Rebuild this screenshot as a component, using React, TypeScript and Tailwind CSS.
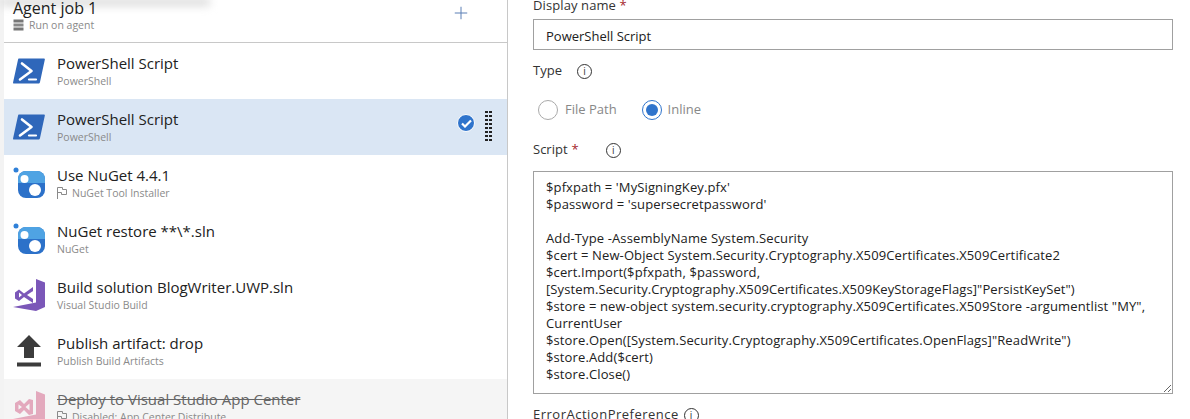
import { Plus } from "lucide-react";

const font = { fontFamily: '"Open Sans", sans-serif' };

const scriptText = `$pfxpath = 'MySigningKey.pfx'
$password = 'supersecretpassword'

Add-Type -AssemblyName System.Security
$cert = New-Object System.Security.Cryptography.X509Certificates.X509Certificate2
$cert.Import($pfxpath, $password,
[System.Security.Cryptography.X509Certificates.X509KeyStorageFlags]"PersistKeySet")
$store = new-object system.security.cryptography.X509Certificates.X509Store -argumentlist "MY",
CurrentUser
$store.Open([System.Security.Cryptography.X509Certificates.OpenFlags]"ReadWrite")
$store.Add($cert)
$store.Close()`;

function PowerShellIcon() {
    return (
        <svg width="32" height="26" viewBox="0 0 32 26">
            <path d="M6 0.5H31c0.8 0 1 0.5 0.8 1.2L27 24c-0.2 1-0.8 1.5-1.7 1.5H1c-0.8 0-1.1-0.5-0.9-1.3L5 1.8C5.2 1 5.5 0.5 6 0.5Z" fill="#2f67ba" />
            <path d="M9 5.5L18.5 13L7 21.5" fill="none" stroke="#fff" strokeWidth="2.6" strokeLinecap="round" strokeLinejoin="round" />
            <path d="M16 21.5H23" fill="none" stroke="#fff" strokeWidth="2.2" strokeLinecap="round" />
        </svg>
    );
}

function NuGetIcon() {
    return (
        <svg width="32" height="32" viewBox="0 0 32 32">
            <circle cx="3" cy="3" r="2.5" fill="#2f80d8" />
            <rect x="5" y="4" width="27" height="27" rx="8" fill="#2c71c9" />
            <path d="M5 12a8 8 0 0 1 8-8h11a8 8 0 0 1 8 8v4H5Z" fill="#4fa3e3" />
            <circle cx="11.5" cy="12" r="4" fill="#fff" />
            <circle cx="22" cy="23" r="6" fill="#fff" />
        </svg>
    );
}

function VisualStudioIcon({ color = "#7b57b8" }: { color?: string }) {
    return (
        <svg width="32" height="33" viewBox="0 0 32 33">
            <path d="M23 0L32 3.5V28L23 32L0 28L23 23.5Z" fill={color} />
            <path d="M2 13.5L6 10.5L11 14.5L20 8V24L11 18L6 22L2 19.5Z M6 13.5V18.5L9 16Z M14 16L20 20V12Z" fill={color} fillRule="evenodd" />
        </svg>
    );
}

function AppCenterIcon() {
    return (
        <svg width="32" height="33" viewBox="0 0 32 33">
            <path d="M23 0L32 3.5V28L23 32L0 28L23 23.5Z" fill="#e3a9bd" />
            <path d="M2 12L7 9L11 13L16 8L20 9V23L16 24L11 19L7 23L2 20Z" fill="#e3a9bd" />
            <path d="M12.5 16L16.5 12.5V19.5Z M5.5 13.5L9 16L5.5 18.5Z" fill="#f5f5f5" />
        </svg>
    );
}

function UploadIcon() {
    return (
        <svg width="24" height="32" viewBox="0 0 24 32">
            <path d="M12 0L24 12H17V23H7V12H0Z" fill="#3c3c3c" />
            <rect y="27.5" width="24" height="4" fill="#3c3c3c" />
        </svg>
    );
}

function TagIcon({ kind }: { kind: "server" | "flag" }) {
    if (kind === "server") {
        return (
            <svg width="11" height="12" viewBox="0 0 11 12" className="shrink-0">
                <rect x="0.5" y="0.5" width="10" height="3" fill="#777" />
                <rect x="0.5" y="4.5" width="10" height="3" fill="#888" />
                <rect x="0.5" y="8.5" width="10" height="3" fill="#777" />
            </svg>
        );
    }
    return (
        <svg width="10" height="12" viewBox="0 0 10 12" className="shrink-0" fill="none" stroke="#8a8a8a">
            <path d="M0.5 12V0.5H5.5V2.5H9.5V7.5H4.5V5.5H0.5" />
        </svg>
    );
}

function InfoIcon() {
    return (
        <span className="w-[15px] h-[15px] rounded-full border border-[#333] flex items-center justify-center text-[10px] leading-none text-[#333]">
            i
        </span>
    );
}

function TaskRow({
    icon,
    title,
    subtitle,
    tag,
    selected,
    disabled,
}: {
    icon: React.ReactNode;
    title: string;
    subtitle: string;
    tag?: boolean;
    selected?: boolean;
    disabled?: boolean;
}) {
    return (
        <div className={`h-14 shrink-0 flex items-center ${selected ? "bg-[#dae6f4]" : disabled ? "bg-[#f5f5f5]" : ""}`}>
            <div className="w-[53px] pl-[9px] shrink-0">{icon}</div>
            <div className="min-w-0 flex-1">
                <div className={`text-[15px] leading-[19px] ${disabled ? "text-[#666] line-through" : "text-[#212121]"}`}>
                    {title}
                </div>
                <div className="flex items-center gap-[5px] mt-[1px] text-[10.5px] leading-[14px] text-[#8a8a8a]">
                    {tag && <TagIcon kind="flag" />}
                    {subtitle}
                </div>
            </div>
            {selected && (
                <div className="flex items-center gap-[10px] pr-[15px]">
                    <span className="w-[18px] h-[18px] -mt-[8px] rounded-full bg-[#2f74cc] border border-white flex items-center justify-center">
                        <svg width="11" height="9" viewBox="0 0 11 9" fill="none" stroke="#fff" strokeWidth="2.2">
                            <path d="M1 4.5L4 7.5L10 1.5" />
                        </svg>
                    </span>
                    <div className="grid grid-cols-2 gap-x-[1px] gap-y-[2px] -mt-[2px]">
                        {Array.from({ length: 16 }).map((_, i) => (
                            <span key={i} className="w-[3px] h-[2px] bg-[#222]" />
                        ))}
                    </div>
                </div>
            )}
        </div>
    );
}

export default function App() {
    return (
        <div className="relative flex h-[419px] w-[1190px] overflow-hidden bg-white" style={font}>
            <div className="absolute left-0 -top-[2px] w-[210px] h-[8px] bg-[#dcdcdc] blur-[4px]" />
            <div className="w-[4px] shrink-0 bg-[#f3f3f3]" />

            {/* task list */}
            <div className="relative w-[504px] shrink-0 flex flex-col border-r border-[#c8c8c8]">
                <div className="h-[43px] shrink-0 flex justify-between border-b border-[#c8c8c8] pl-[9px] pr-[36px]">
                    <div>
                        <div className="text-[16px] leading-[18px] -mt-[1px] text-[#212121]">Agent job 1</div>
                        <div className="flex items-center gap-[5px] mt-[1px] text-[10.5px] leading-[14px] text-[#8a8a8a]">
                            <TagIcon kind="server" />
                            Run on agent
                        </div>
                    </div>
                    <Plus size={20} strokeWidth={1.2} className="text-[#5a7fb5] mt-[3px]" />
                </div>
                <TaskRow icon={<PowerShellIcon />} title="PowerShell Script" subtitle="PowerShell" />
                <TaskRow icon={<PowerShellIcon />} title="PowerShell Script" subtitle="PowerShell" selected />
                <TaskRow icon={<NuGetIcon />} title="Use NuGet 4.4.1" subtitle="NuGet Tool Installer" tag />
                <TaskRow icon={<NuGetIcon />} title="NuGet restore **\*.sln" subtitle="NuGet" />
                <TaskRow icon={<VisualStudioIcon />} title="Build solution BlogWriter.UWP.sln" subtitle="Visual Studio Build" />
                <TaskRow icon={<div className="pl-[4px]"><UploadIcon /></div>} title="Publish artifact: drop" subtitle="Publish Build Artifacts" />
                <TaskRow icon={<AppCenterIcon />} title="Deploy to Visual Studio App Center" subtitle="Disabled: App Center Distribute" tag disabled />
            </div>

            {/* task form */}
            <div className="w-[640px] ml-[25px] shrink-0 flex flex-col text-[13px] text-[#333]">
                <div className="h-[19px] shrink-0 leading-[10px] tracking-[0.1px]">
                    Display name <span className="text-[#a4262c]">*</span>
                </div>
                <div className="h-[31px] shrink-0 border border-[#a0a0a0] flex items-center pl-[12px] pt-[5px] text-[#212121]">PowerShell Script</div>

                <div className="flex items-center gap-[15px] h-[18px] shrink-0 mt-[12px]">
                    Type <InfoIcon />
                </div>

                <div className="flex items-center h-[20px] shrink-0 mt-[20px] pl-[5px] text-[#888]">
                    <span className="w-[20px] h-[20px] rounded-full border border-[#aaa] mr-[7px]" />
                    File Path
                    <span className="w-[20px] h-[20px] rounded-full border border-[#2f74cc] ml-[25px] mr-[6px] flex items-center justify-center">
                        <span className="w-[12px] h-[12px] rounded-full bg-[#2f74cc]" />
                    </span>
                    Inline
                </div>

                <div className="flex items-center h-[18px] shrink-0 mt-[21px]">
                    Script <span className="text-[#a4262c] ml-[4px]">*</span>
                    <span className="ml-[27px]"><InfoIcon /></span>
                </div>

                <textarea
                    readOnly
                    wrap="off"
                    value={scriptText}
                    className="block h-[223px] shrink-0 w-full mt-[12px] border border-[#a0a0a0] resize-y overflow-hidden pt-[7px] pl-[12px] pr-[4px] text-[13px] leading-[17px] tracking-[0.12px] text-[#212121] outline-none"
                />

                <div className="flex items-center gap-[5px] h-[18px] shrink-0 mt-[12px] tracking-[0.5px]">
                    ErrorActionPreference <InfoIcon />
                </div>
            </div>
        </div>
    );
}
